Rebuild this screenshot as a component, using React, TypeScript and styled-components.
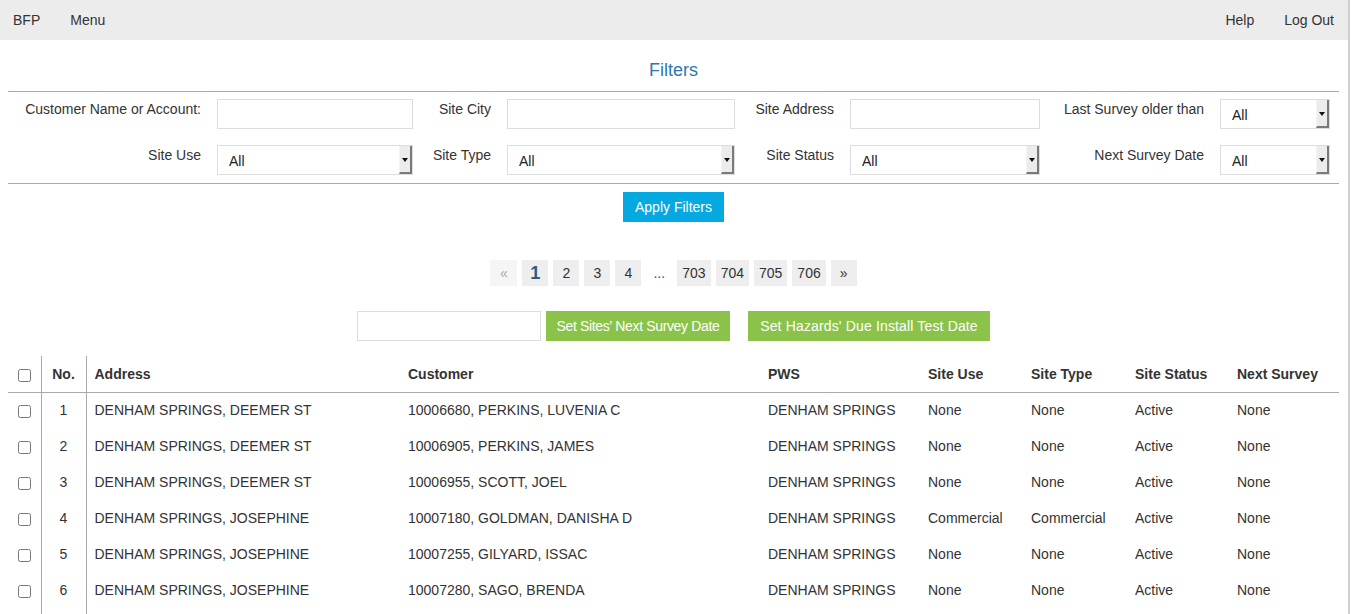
import React from "react";
import styled, { createGlobalStyle } from "styled-components";

const Global = createGlobalStyle`
  html, body { margin: 0; padding: 0; background: #fff; overflow: hidden; }
  body { font-family: "Liberation Sans", Arial, sans-serif; font-size: 14px; color: #333; }
  * { box-sizing: border-box; }
`;

const Page = styled.div`
  width: 1350px;
  min-height: 614px;
  border-right: 2px solid #cfcfcf;
`;

const NavBar = styled.nav`
  height: 40px;
  background: #ececec;
  display: flex;
  align-items: center;
  padding: 0 14px 0 13px;
  font-size: 14px;
  color: #333;
`;

const NavGroup = styled.div<{ $right?: boolean }>`
  display: flex;
  gap: 30px;
  margin-left: ${(p) => (p.$right ? "auto" : "0")};
`;

const NavLink = styled.span`
  line-height: 20px;
`;

const Content = styled.div`
  padding: 0 9px 0 8px;
`;

const Title = styled.h2`
  margin: 0;
  padding-top: 19px;
  height: 51px;
  text-align: center;
  font-weight: normal;
  font-size: 18px;
  line-height: 22px;
  color: #2d77b0;
`;

const Rule = styled.hr`
  margin: 0;
  border: 0;
  border-top: 1px solid #aaa;
`;

const FilterGrid = styled.div`
  display: grid;
  grid-template-columns: 209px 196px 94px 228px 115px 190px 180px 110px;
  row-gap: 16px;
  padding: 7px 0 8px;
`;

const Label = styled.label`
  text-align: right;
  padding: 2px 16px 0 0;
  line-height: 16px;
  color: #333;
`;

const TextInput = styled.input<{ $w?: number }>`
  height: 30px;
  width: ${(p) => (p.$w ? `${p.$w}px` : "100%")};
  border: 1px solid #ddd;
  padding: 0 8px;
  font: inherit;
  outline: none;
`;

const SelectWrap = styled.div`
  position: relative;
  height: 30px;
`;

const Select = styled.select`
  appearance: none;
  -webkit-appearance: none;
  width: 100%;
  height: 30px;
  border: 1px solid #ddd;
  background: #fff;
  padding: 2px 0 0 11px;
  font-family: "Liberation Sans", Arial, sans-serif;
  font-size: 14px;
  color: #222;
  border-radius: 0;
  outline: none;
`;

const Arrow = styled.span`
  position: absolute;
  top: 1px;
  right: 1px;
  bottom: 1px;
  width: 13px;
  background: #ececec;
  border-left: 1px solid #f4f4f4;
  border-right: 2px solid #7a7a7a;
  border-bottom: 2px solid #7a7a7a;
  pointer-events: none;
  &::after {
    content: "";
    position: absolute;
    left: 2px;
    top: 12px;
    border-left: 3px solid transparent;
    border-right: 3px solid transparent;
    border-top: 4px solid #111;
  }
`;

const Center = styled.div<{ $mt: number }>`
  display: flex;
  justify-content: center;
  align-items: center;
  margin-top: ${(p) => p.$mt}px;
`;

const ApplyButton = styled.button`
  height: 30px;
  padding: 0 12px;
  border: 0;
  background: #05a9e2;
  color: #fff;
  font-family: "Liberation Sans", Arial, sans-serif;
  font-size: 14px;
`;

const Pager = styled.div`
  display: flex;
  gap: 5px;
`;

const PageItem = styled.span<{ $active?: boolean; $disabled?: boolean; $plain?: boolean; $w?: number }>`
  height: 26px;
  width: ${(p) => (p.$w ? `${p.$w}px` : "auto")};
  min-width: 26px;
  padding: 0 5px;
  display: flex;
  align-items: center;
  justify-content: center;
  font-size: ${(p) => (p.$active ? "18px" : "14px")};
  font-weight: ${(p) => (p.$active ? "bold" : "normal")};
  background: ${(p) => (p.$plain ? "transparent" : p.$disabled ? "#f5f5f5" : "#eeeeee")};
  color: ${(p) => (p.$active ? "#2f5c85" : p.$disabled ? "#aaa" : p.$plain ? "#2a5a8a" : "#333")};
`;

const GreenButton = styled.button<{ $ml: number; $w: number; $ls: number }>`
  height: 30px;
  width: ${(p) => p.$w}px;
  padding: 0;
  margin-left: ${(p) => p.$ml}px;
  border: 0;
  background: #8bc34a;
  color: #fff;
  font-family: "Liberation Sans", Arial, sans-serif;
  font-size: 14px;
  letter-spacing: ${(p) => p.$ls}px;
  white-space: nowrap;
`;

const Table = styled.table`
  width: 100%;
  margin-top: 15px;
  border-collapse: collapse;
  table-layout: fixed;
`;

const Th = styled.th<{ $w?: number; $center?: boolean; $divider?: boolean }>`
  width: ${(p) => (p.$w ? `${p.$w}px` : "auto")};
  height: 36px;
  padding: 0 8px;
  text-align: ${(p) => (p.$center ? "center" : "left")};
  font-weight: bold;
  font-size: 14px;
  color: #333;
  border-right: ${(p) => (p.$divider ? "1px solid #aaa" : "0")};
`;

const HeadRow = styled.tr`
  border-bottom: 1px solid #aaa;
`;

const Td = styled.td<{ $center?: boolean; $divider?: boolean }>`
  height: 36px;
  padding: 0 8px;
  text-align: ${(p) => (p.$center ? "center" : "left")};
  font-size: 14px;
  color: #333;
  white-space: nowrap;
  border-right: ${(p) => (p.$divider ? "1px solid #aaa" : "0")};
`;

const Check = styled.input`
  margin: 0;
  width: 13px;
  height: 13px;
  vertical-align: middle;
`;

const rows = [
  ["DENHAM SPRINGS, DEEMER ST", "10006680, PERKINS, LUVENIA C", "None", "None"],
  ["DENHAM SPRINGS, DEEMER ST", "10006905, PERKINS, JAMES", "None", "None"],
  ["DENHAM SPRINGS, DEEMER ST", "10006955, SCOTT, JOEL", "None", "None"],
  ["DENHAM SPRINGS, JOSEPHINE", "10007180, GOLDMAN, DANISHA D", "Commercial", "Commercial"],
  ["DENHAM SPRINGS, JOSEPHINE", "10007255, GILYARD, ISSAC", "None", "None"],
  ["DENHAM SPRINGS, JOSEPHINE", "10007280, SAGO, BRENDA", "None", "None"],
];

const SelectBox = () => (
  <SelectWrap>
    <Select defaultValue="All">
      <option>All</option>
    </Select>
    <Arrow />
  </SelectWrap>
);

export default function App() {
  return (
    <>
      <Global />
      <Page>
        <NavBar>
          <NavGroup>
            <NavLink>BFP</NavLink>
            <NavLink>Menu</NavLink>
          </NavGroup>
          <NavGroup $right>
            <NavLink>Help</NavLink>
            <NavLink>Log Out</NavLink>
          </NavGroup>
        </NavBar>
        <Content>
          <Title>Filters</Title>
          <Rule />
          <FilterGrid>
            <Label>Customer Name or Account:</Label>
            <TextInput />
            <Label>Site City</Label>
            <TextInput />
            <Label>Site Address</Label>
            <TextInput />
            <Label>Last Survey older than</Label>
            <SelectBox />
            <Label>Site Use</Label>
            <SelectBox />
            <Label>Site Type</Label>
            <SelectBox />
            <Label>Site Status</Label>
            <SelectBox />
            <Label>Next Survey Date</Label>
            <SelectBox />
          </FilterGrid>
          <Rule />
          <Center $mt={8}>
            <ApplyButton>Apply Filters</ApplyButton>
          </Center>
          <Center $mt={38}>
            <Pager>
              <PageItem $disabled $w={27}>«</PageItem>
              <PageItem $active>1</PageItem>
              <PageItem>2</PageItem>
              <PageItem>3</PageItem>
              <PageItem>4</PageItem>
              <PageItem $plain>...</PageItem>
              <PageItem>703</PageItem>
              <PageItem>704</PageItem>
              <PageItem>705</PageItem>
              <PageItem>706</PageItem>
              <PageItem>»</PageItem>
            </Pager>
          </Center>
          <Center $mt={25}>
            <TextInput $w={184} />
            <GreenButton $ml={5} $w={184} $ls={-0.35}>Set Sites' Next Survey Date</GreenButton>
            <GreenButton $ml={18} $w={242} $ls={0.15}>Set Hazards' Due Install Test Date</GreenButton>
          </Center>
          <Table>
            <thead>
              <HeadRow>
                <Th $w={33} $center $divider>
                  <Check type="checkbox" />
                </Th>
                <Th $w={45} $center $divider>No.</Th>
                <Th $w={314}>Address</Th>
                <Th $w={360}>Customer</Th>
                <Th $w={160}>PWS</Th>
                <Th $w={103}>Site Use</Th>
                <Th $w={104}>Site Type</Th>
                <Th $w={102}>Site Status</Th>
                <Th>Next Survey</Th>
              </HeadRow>
            </thead>
            <tbody>
              {rows.map((r, i) => (
                <tr key={i}>
                  <Td $center $divider>
                    <Check type="checkbox" />
                  </Td>
                  <Td $center $divider>{i + 1}</Td>
                  <Td>{r[0]}</Td>
                  <Td>{r[1]}</Td>
                  <Td>DENHAM SPRINGS</Td>
                  <Td>{r[2]}</Td>
                  <Td>{r[3]}</Td>
                  <Td>Active</Td>
                  <Td>None</Td>
                </tr>
              ))}
              <tr>
                <Td $center $divider />
                <Td $center $divider />
                <Td />
                <Td />
                <Td />
                <Td />
                <Td />
                <Td />
                <Td />
              </tr>
            </tbody>
          </Table>
        </Content>
      </Page>
    </>
  );
}
